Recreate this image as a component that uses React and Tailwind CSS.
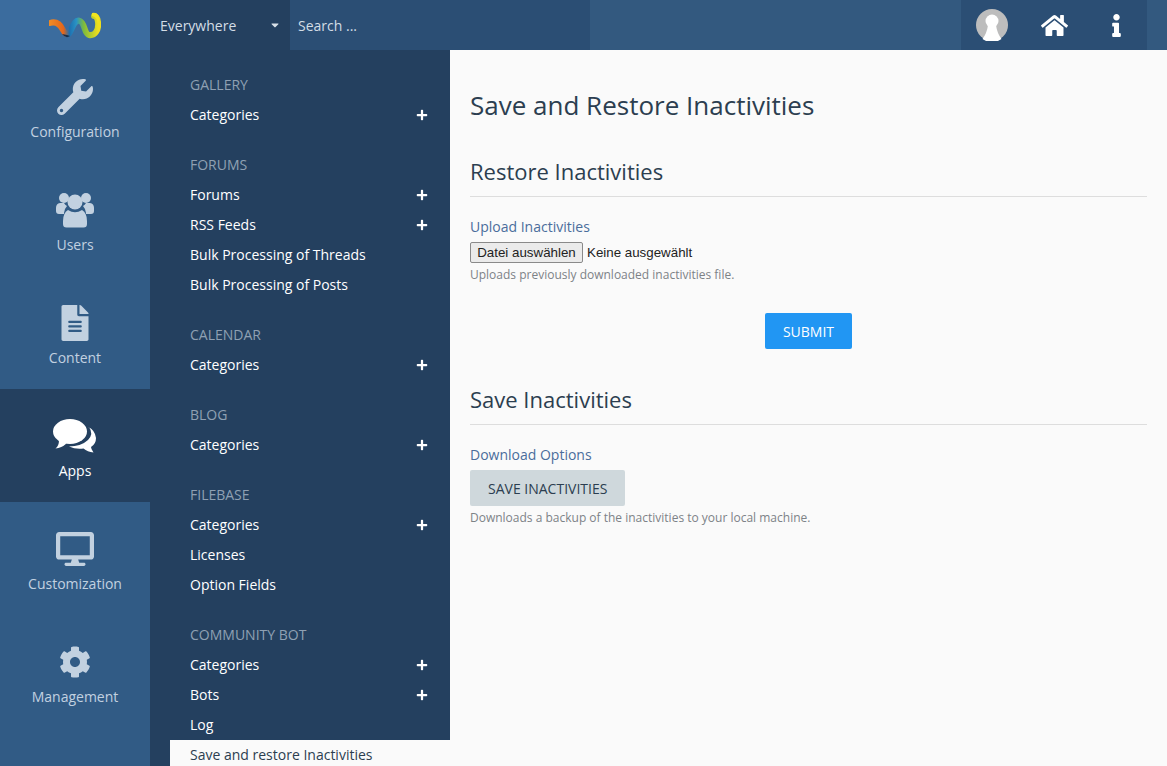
import React from 'react';
import { FaWrench, FaFileAlt, FaDesktop, FaCog, FaHome, FaInfo, FaPlus, FaCaretDown } from 'react-icons/fa';

const UsersIcon = () => (
  <svg viewBox="0 0 38 36" className="w-[38px] h-[36px]" fill="currentColor">
    <circle cx="8" cy="6" r="5" />
    <circle cx="30" cy="6" r="5" />
    <path d="M4 11 a5 5 0 0 0 -4 5 v3 a3 3 0 0 0 3 3 h5 v-1 a11 11 0 0 1 3 -7 a8 8 0 0 1 -3 -3 z" />
    <path d="M34 11 a5 5 0 0 1 4 5 v3 a3 3 0 0 1 -3 3 h-5 v-1 a11 11 0 0 0 -3 -7 a8 8 0 0 0 3 -3 z" />
    <circle cx="19" cy="10" r="7.5" />
    <path d="M12 18 q7 4.5 14 0 q5 3 5 11 v3 a3.5 3.5 0 0 1 -3.5 3.5 h-17 a3.5 3.5 0 0 1 -3.5 -3.5 v-3 q0 -8 5 -11 z" />
  </svg>
);

const CommentsIcon = () => (
  <svg viewBox="0 0 44 34" className="w-[44px] h-[34px]" fill="currentColor">
    <ellipse cx="17" cy="12.5" rx="17" ry="12.5" />
    <path d="M6 21 q0 6 -3.500 8.500 q6 -0.500 11 -5 z" />
    <path d="M35.500 8 a14 14 0 0 1 7.500 11 q0 6 -5 9 q0 2 2.500 5.500 q-6 -0.500 -10 -4 q-8 1 -14.500 -2 q12 0 19 -6.500 q6 -6 1 -13 z" />
  </svg>
);

const AvatarIcon = () => (
  <svg viewBox="0 0 32 32" className="w-8 h-8">
    <circle cx="16" cy="16" r="16" fill="#bdbdbd" />
    <circle cx="16" cy="12" r="6.500" fill="#fff" />
    <path d="M12 16 h8 q1 8 5.500 14 a16 16 0 0 1 -19 0 q4.500 -6 5.500 -14 z" fill="#fff" />
  </svg>
);

const Logo = () => (
  <svg viewBox="0 0 52 30" className="w-[52px] h-[30px]" fill="none">
    <defs>
      <linearGradient id="wave" x1="0" y1="0" x2="1" y2="0">
        <stop offset="0" stopColor="#f08a24" />
        <stop offset="0.28" stopColor="#e2661c" />
        <stop offset="0.4" stopColor="#1d6fb0" />
        <stop offset="0.55" stopColor="#2a93c4" />
        <stop offset="0.7" stopColor="#7dbb3c" />
        <stop offset="1" stopColor="#eede1e" />
      </linearGradient>
    </defs>
    <path d="M1 13 C7 11 11 14 14 20 C16 24 19 26 21 22 C24 16 26 9 31 11 C36 13 35 24 40 25 C46 26 50 20 49 12 C48.500 8 47 6 45 6" stroke="url(#wave)" strokeWidth="6" strokeLinecap="round" />
    <path d="M43 3 q6 -1 7 5 l-1 5 q-1 -6 -6 -7 z" fill="#f2e520" />
    <path d="M13 24 q4 5 8 2 l-3 -1 z" fill="#15304f" />
  </svg>
);

const mainMenu = [
  { label: 'Configuration', icon: <FaWrench className="text-[36px]" /> },
  { label: 'Users', icon: <UsersIcon /> },
  { label: 'Content', icon: <FaFileAlt className="text-[36px]" /> },
  { label: 'Apps', icon: <CommentsIcon />, active: true },
  { label: 'Customization', icon: <FaDesktop className="text-[38px]" /> },
  { label: 'Management', icon: <FaCog className="text-[32px]" /> },
];

const subMenu = [
  { title: 'Gallery', items: [['Categories', true]] },
  { title: 'Forums', items: [['Forums', true], ['RSS Feeds', true], ['Bulk Processing of Threads'], ['Bulk Processing of Posts']] },
  { title: 'Calendar', items: [['Categories', true]] },
  { title: 'Blog', items: [['Categories', true]] },
  { title: 'Filebase', items: [['Categories', true], ['Licenses'], ['Option Fields']] },
  { title: 'Community Bot', items: [['Categories', true], ['Bots', true], ['Log']] },
];

export default function App() {
  return (
    <div className="h-[766px] overflow-hidden flex flex-col bg-[#fafafa] text-[14px] text-[#2c3e50] font-['Open_Sans',sans-serif]">
      <header className="h-[50px] shrink-0 flex bg-[#33597f]">
        <div className="w-[150px] flex items-center justify-center bg-[#3b6c9e]">
          <Logo />
        </div>
        <div className="w-[140px] flex items-center justify-between pl-[10px] pr-[9px] bg-[#24405f] text-[#d3dde6]">
          <span>Everywhere</span>
          <FaCaretDown className="text-[12px] text-[#d8e0e8]" />
        </div>
        <div className="w-[300px] flex items-center pl-2 bg-[#2b4e74] text-[#d3dde6]">Search ...</div>
        <div className="ml-auto mr-5 w-[186px] flex items-center bg-[#2b4e74] text-white">
          <div className="w-[62px] flex justify-center"><AvatarIcon /></div>
          <div className="w-[62px] flex justify-center"><FaHome className="text-[27px]" /></div>
          <div className="w-[62px] flex justify-center"><FaInfo className="text-[23px]" /></div>
        </div>
      </header>

      <div className="flex flex-1 min-h-0">
        <nav className="w-[150px] shrink-0 bg-[#315b85]">
          {mainMenu.map((m) => (
            <div
              key={m.label}
              className={`h-[113px] flex flex-col items-center pt-[27px] ${m.active ? 'bg-[#24405f] text-white' : 'text-[#c2d1e0]'}`}
            >
              <div className="h-[40px] flex items-center justify-center">{m.icon}</div>
              <div className="mt-[5px] leading-[20px]">{m.label}</div>
            </div>
          ))}
        </nav>

        <aside className="w-[300px] shrink-0 bg-[#24405f] pt-5 pl-5 leading-[30px]">
          {subMenu.map((group) => (
            <div key={group.title} className="mb-5">
              <div className="pl-5 uppercase text-[#8fa0b3]">{group.title}</div>
              {group.items.map(([name, plus]) => (
                <div key={name} className="flex items-center justify-between pl-5 pr-[22px] h-[30px] text-white">
                  <span>{name}</span>
                  {plus && <FaPlus className="text-[12px]" />}
                </div>
              ))}
              {group.title === 'Community Bot' && (
                <div className="pl-5 h-[30px] bg-[#fafafa] text-[#2c3e50]">Save and restore Inactivities</div>
              )}
            </div>
          ))}
        </aside>

        <main className="flex-1 min-w-0 px-5">
          <h1 className="mt-[36px] text-[26px] leading-[39px] text-[#2c3e50]">Save and Restore Inactivities</h1>

          <section className="mt-[30px]">
            <h2 className="text-[22px] leading-[33px] pb-[8px] border-b border-[#ddd]">Restore Inactivities</h2>
            <div className="mt-[20px] leading-[20px] text-[#4a6d9c]">Upload Inactivities</div>
            <div className="mt-[5px] flex items-center font-['Liberation_Sans',sans-serif] text-[13.33px] text-[#222]">
              <button className="h-[21px] w-[113px] rounded-[2px] border border-[#8a8a8a] bg-[#ebebeb] mr-1">Datei auswählen</button>
              <span>Keine ausgewählt</span>
            </div>
            <p className="mt-[3px] text-[12px] leading-[18px] text-[#7d8287]">Uploads previously downloaded inactivities file.</p>
            <div className="mt-[29px] flex justify-center">
              <button className="h-9 px-[18px] rounded-[2px] bg-[#2196f3] text-white">SUBMIT</button>
            </div>
          </section>

          <section className="mt-[34px]">
            <h2 className="text-[22px] leading-[33px] pb-[8px] border-b border-[#ddd]">Save Inactivities</h2>
            <div className="mt-[20px] leading-[20px] text-[#4a6d9c]">Download Options</div>
            <button className="mt-[5px] block h-9 px-[18px] rounded-[2px] bg-[#cfd8dc] text-[#2c3e50]">SAVE INACTIVITIES</button>
            <p className="mt-[3px] text-[12px] leading-[18px] text-[#7d8287]">Downloads a backup of the inactivities to your local machine.</p>
          </section>
        </main>
      </div>
    </div>
  );
}
